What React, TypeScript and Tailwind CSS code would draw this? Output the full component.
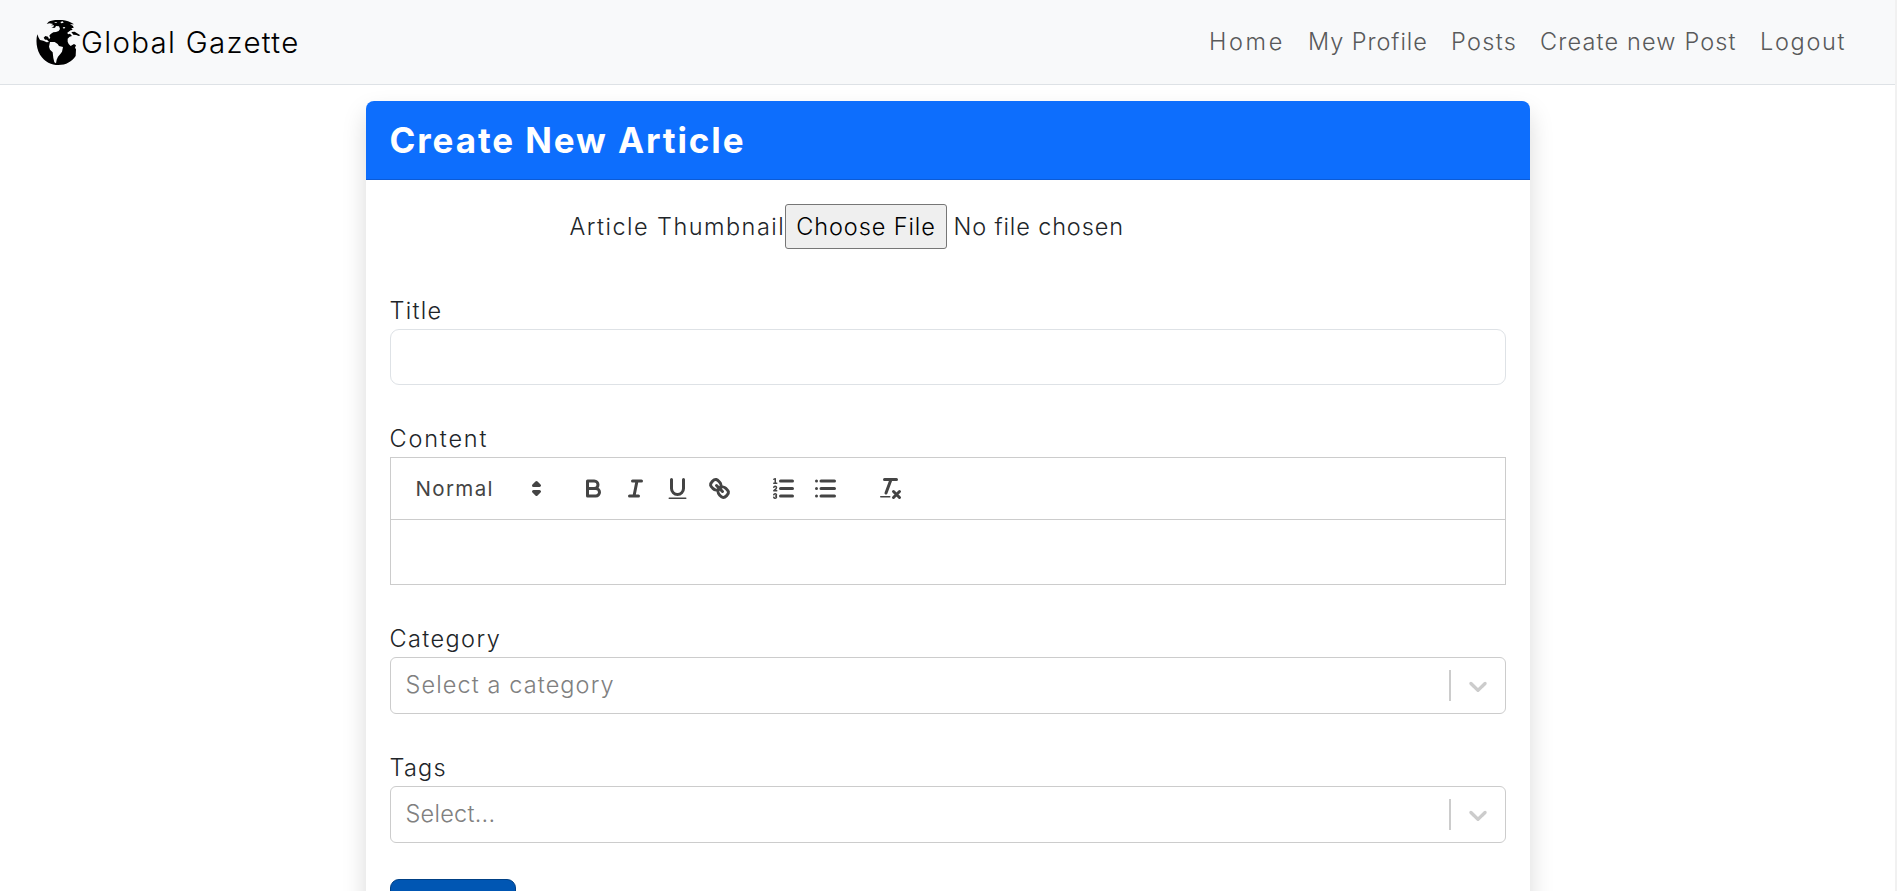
import React from "react";

const stroke = "fill-none stroke-[#444] stroke-2 [stroke-linecap:round] [stroke-linejoin:round]";
const thin = "fill-none stroke-[#444] stroke-1 [stroke-linecap:round] [stroke-linejoin:round]";
const solid = "fill-[#444]";

function Tool({ label, children }: { label: string; children: React.ReactNode }) {
  return (
    <button type="button" aria-label={label} className="h-9 w-[42px] px-[7.5px] py-[4.5px]">
      <svg viewBox="0 0 18 18" className="block size-[27px]">{children}</svg>
    </button>
  );
}

function Toolbar() {
  return (
    <div className="flex h-[63px] items-center gap-[22.5px] border border-[#ccc] px-3">
      <div className="flex h-9 w-[147px] items-center justify-between pl-[13px]">
        <span className="text-[20.5px] font-normal tracking-[1.35px] text-[#444]">Normal</span>
        <svg viewBox="0 0 18 18" className="size-[27px] shrink-0">
          <polygon className="fill-[#444] stroke-[#444] stroke-2 [stroke-linejoin:round]" points="7 11 9 13 11 11 7 11" />
          <polygon className="fill-[#444] stroke-[#444] stroke-2 [stroke-linejoin:round]" points="7 7 9 5 11 7 7 7" />
        </svg>
      </div>
      <div className="flex">
        <Tool label="Bold">
          <path className={stroke} d="M5,4H9.5A2.5,2.5,0,0,1,12,6.5v0A2.5,2.5,0,0,1,9.5,9H5Z" />
          <path className={stroke} d="M5,9h5.5A2.5,2.5,0,0,1,13,11.5v0A2.5,2.5,0,0,1,10.5,14H5Z" />
        </Tool>
        <Tool label="Italic">
          <path className={stroke} d="M7,4H13M5,14H11M8,14L10,4" />
        </Tool>
        <Tool label="Underline">
          <path className={stroke} d="M5,3V9a4.012,4.012,0,0,0,4,4H9a4.012,4.012,0,0,0,4-4V3" />
          <rect className={solid} height="1" rx="0.5" width="12" x="3" y="15" />
        </Tool>
        <Tool label="Link">
          <path className={stroke} d="M7,7L11,11" />
          <path className={stroke} d="M8.9,4.577a3.476,3.476,0,0,1,.36,4.679A3.476,3.476,0,0,1,4.577,8.9C3.185,7.5,2.035,6.4,4.217,4.217S7.5,3.185,8.9,4.577Z" />
          <path className={stroke} d="M13.423,9.1a3.476,3.476,0,0,0-4.679-.36,3.476,3.476,0,0,0,.36,4.679c1.392,1.392,2.5,2.542,4.679.36S14.815,10.5,13.423,9.1Z" />
        </Tool>
      </div>
      <div className="flex">
        <Tool label="Numbered list">
          <path className={stroke} d="M7,4H15M7,9H15M7,14H15" />
          <path className={thin} d="M2.5,5.5H4.5" />
          <path className={solid} d="M3.5,6A0.5,0.5,0,0,1,3,5.5V3.085l-0.276.138A0.5,0.5,0,0,1,2.053,3c-0.124-.247-0.023-0.324.224-0.447l1-.5A0.5,0.5,0,0,1,4,2.5v3A0.5,0.5,0,0,1,3.5,6Z" />
          <path className={thin} d="M4.5,10.5h-2c0-.234,1.85-1.076,1.85-2.234A0.959,0.959,0,0,0,2.5,8.156" />
          <path className={thin} d="M2.5,14.846a0.959,0.959,0,0,0,1.85-.109A0.7,0.7,0,0,0,3.75,14a0.688,0.688,0,0,0,.6-0.736,0.959,0.959,0,0,0-1.85-.109" />
        </Tool>
        <Tool label="Bulleted list">
          <path className={stroke} d="M6,4H15M6,9H15M6,14H15M3,4H3M3,9H3M3,14H3" />
        </Tool>
      </div>
      <Tool label="Clear formatting">
        <path className={stroke} d="M5,3H13M6,12L9.35,3M11,11L15,15M15,11L11,15" />
        <rect className={solid} height="1" rx="0.5" width="7" x="2" y="14" />
      </Tool>
    </div>
  );
}

function Select({ children }: { children: React.ReactNode }) {
  return (
    <div className="flex h-[57px] items-center rounded-md border border-[#ccc] bg-white">
      <div className="flex-1 pb-0.5 pl-[15px] leading-9 text-[#808080]">{children}</div>
      <span className="h-[31px] w-0.5 bg-[#ccc]" />
      <span className="flex w-[54px] justify-center text-[#ccc]">
        <svg viewBox="0 0 20 20" className="size-[30px] fill-current">
          <path d="M4.516 7.548c0.436-0.446 1.043-0.481 1.576 0l3.908 3.747 3.908-3.747c0.533-0.481 1.141-0.446 1.574 0 0.436 0.445 0.408 1.197 0 1.615-0.406 0.418-4.695 4.502-4.695 4.502-0.217 0.223-0.502 0.335-0.787 0.335s-0.57-0.112-0.789-0.335c0 0-4.287-4.084-4.695-4.502s-0.436-1.17 0-1.615z" />
        </svg>
      </span>
    </div>
  );
}

function Globe() {
  return (
    <svg viewBox="108 60 135 135" className="size-[45px]">
      <path d="M112 103 C107 121 109 146 120 164 C134 186 155 195 175 195 C198 195 216 185 227 168 L228 148 L225 143 L228 136 L222 132 L212 138 L206 132 L203 125 L203 116 L209 110 L216 108 L210 101 L204 103 L202 98 L212 91 L218 90 L214 84 L221 84 L219 78 L210 73 L222 73 C205 61 190 59 174 60 C162 60 152 62 146 65 L140 72 L148 70 L160 72 L153 76 L162 76 L160 81 L154 84 L165 83 L168 78 L177 79 L180 87 L176 93 L168 96 L160 97 L152 102 L148 107 L151 114 L147 117 L144 110 L136 108 L131 113 L135 119 L141 119 L147 126 L140 127 L130 122 L120 120 L116 113 Z" />
      <path d="M214 96 L224 95 L230 99 L241 106 L236 108 L229 105 L220 104 Z" />
      <path className="fill-[#f8f9fa]" d="M150 126 L164 126 L173 132 L177 138 L189 141 L186 155 L181 162 L174 170 L170 179 L168 190 L163 187 L160 174 L158 157 L150 149 L147 140 Z" />
      <path className="fill-[#f8f9fa]" d="M181 66 L188 64 L191 68 L184 70 Z M188 82 L196 81 L192 87 Z M162 66 L172 66 L168 69 Z" />
    </svg>
  );
}

export default function App() {
  return (
    <div className="flex h-[891px] w-full overflow-hidden bg-white font-['Inter','Liberation_Sans',sans-serif] font-light text-[#212529]">
      <div className="flex min-w-0 flex-1 flex-col">
        <nav className="flex h-[85px] shrink-0 items-center justify-between border-b border-[#dee2e6] bg-[#f8f9fa] pr-12 pl-9">
          <a className="flex items-center text-black">
            <Globe />
            <span className="text-[29.5px] leading-[45px] tracking-[1.3px]">Global Gazette</span>
          </a>
          <div className="flex text-[23.5px] leading-9 whitespace-nowrap text-[#595a5b]">
            <a className="w-[99px] tracking-[2.6px]">Home</a>
            <a className="w-[143px] tracking-[0.95px]">My Profile</a>
            <a className="w-[89px] tracking-[1.35px]">Posts</a>
            <a className="w-[220px] tracking-[1.15px]">Create new Post</a>
            <a className="w-[87px] tracking-[1.7px]">Logout</a>
          </div>
        </nav>
        <main className="mx-auto mt-4 w-[1164px] flex-1 rounded-lg bg-white shadow-[0_12px_24px_rgba(0,0,0,0.15)]">
          <h1 className="h-[79px] rounded-t-lg border-b border-[#0c5bd6] bg-[#0d6efd] px-6 text-[35px] leading-[78px] font-bold tracking-[1.9px] text-white">Create New Article</h1>
          <div className="flex flex-col px-6 pt-6 text-[23.5px] leading-9">
            <div className="flex h-[45px] items-center pl-[180px]">
              <span className="w-[215px] tracking-[1.45px] whitespace-nowrap">Article Thumbnail</span>
              <button type="button" className="h-[45px] w-[162px] rounded-[3px] border border-[#767676] bg-[#efefef] pl-px tracking-[0.9px] text-black">Choose File</button>
              <span className="pl-[7px] tracking-[0.87px]">No file chosen</span>
            </div>
            <label className="mt-[44px] tracking-[1.3px]">Title</label>
            <input className="h-14 rounded-[9px] border border-[#dee2e6]" />
            <label className="mt-9 tracking-[1.8px]">Content</label>
            <Toolbar />
            <div className="h-[65px] border border-t-0 border-[#ccc]" />
            <label className="mt-9 tracking-[1.4px]">Category</label>
            <Select><span className="tracking-[1.1px]">Select a category</span></Select>
            <label className="mt-9 tracking-[1.2px]">Tags</label>
            <Select><span className="tracking-[0.25px]">Select...</span></Select>
            <button type="button" aria-label="Submit" className="mt-9 h-14 w-[126px] shrink-0 rounded-[9px] border border-[#004085] bg-[#0056b3]" />
          </div>
        </main>
      </div>
      <div className="w-0.5 bg-[#f1f1f1]" />
    </div>
  );
}
